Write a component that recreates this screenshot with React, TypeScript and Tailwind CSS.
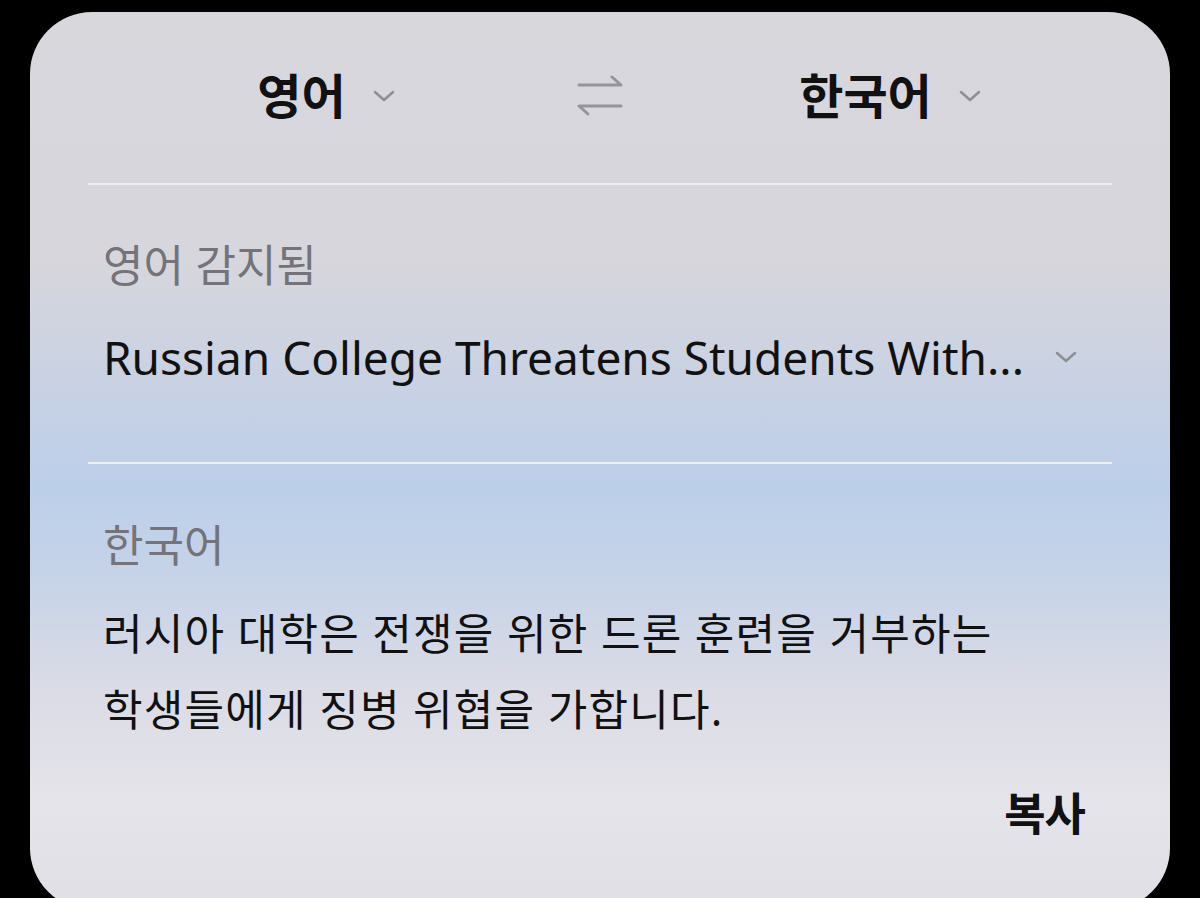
const font = 'font-["Noto_Sans","Noto_Sans_CJK_KR",sans-serif]'

function SwapIcon() {
  return (
    <svg width="48" height="42" viewBox="0 0 48 42" fill="none" stroke="#94949a" strokeWidth="3" strokeLinecap="round" strokeLinejoin="round">
      <path d="M3 10 H45 L36 2" />
      <path d="M45 31 H3 L12 39" />
    </svg>
  )
}

function Chevron() {
  return (
    <svg width="22" height="12" viewBox="0 0 22 12" fill="none" stroke="#8e8e93" strokeWidth="2.5" strokeLinecap="round" strokeLinejoin="round">
      <path d="M2 2 L11 10 L20 2" />
    </svg>
  )
}

function LangButton({ label }: { label: string }) {
  return (
    <div className="flex items-center justify-center gap-[27px]">
      <span className="text-[48px] font-bold leading-none text-[#111]">{label}</span>
      <Chevron />
    </div>
  )
}

export default function App() {
  return (
    <div className={`min-h-[898px] w-[1200px] overflow-hidden bg-black pt-3 ${font}`}>
      <div className="mx-[30px] h-[898px] rounded-[62px] bg-[linear-gradient(180deg,#d8d7dc_0%,#d6d6dc_28%,#cad2e2_40%,#bccfea_53%,#c6d3e8_63%,#dadbe5_75%,#e5e4ea_88%,#e0dfe5_100%)] px-[58px]">
        <div className="grid h-[171px] grid-cols-[1fr_90px_1fr] items-center pb-1">
          <div className="pl-[9px]">
            <LangButton label="영어" />
          </div>
          <div className="flex justify-center">
            <SwapIcon />
          </div>
          <div className="pl-[23px]">
            <LangButton label="한국어" />
          </div>
        </div>
        <div className="h-[2px] bg-[#eeeef2]" />

        <div className="px-[15px] pt-[50px]">
          <p className="text-[44px] leading-[60px] text-[#737379]">영어 감지됨</p>
          <div className="mt-[32px] flex h-[60px] items-center justify-between">
            <p className="text-[46px] leading-[60px] text-[#111]">Russian College Threatens Students With...</p>
            <div className="mr-[20px]">
              <Chevron />
            </div>
          </div>
        </div>
        <div className="mt-[75px] h-[2px] bg-[#eef0f6]" />

        <div className="px-[15px] pt-[51px]">
          <p className="text-[44px] leading-[60px] text-[#737379]">한국어</p>
          <p className="mt-[21px] text-[43px] leading-[76px] tracking-[1.2px] text-[#111]">
            러시아 대학은 전쟁을 위한 드론 훈련을 거부하는
            <br />
            학생들에게 징병 위협을 가합니다.
          </p>
          <div className="mt-[36px] flex justify-end pr-[12px]">
            <span className="text-[45px] font-bold leading-[60px] tracking-[-1px] text-[#111]">복사</span>
          </div>
        </div>
      </div>
    </div>
  )
}
